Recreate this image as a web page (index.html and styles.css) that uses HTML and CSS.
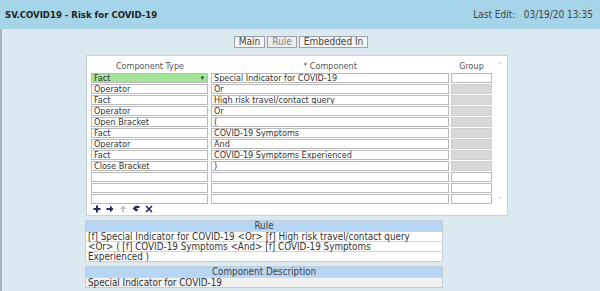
FILE: index.html
```html
<!DOCTYPE html>
<html lang="en">
<head>
  <meta charset="UTF-8" />
  <title>SV.COVID19 - Risk for COVID-19</title>
  <link rel="stylesheet" href="styles.css">
</head>
<body>
  <header class="titlebar">
    <span class="title">SV.COVID19 - Risk for COVID-19</span>
    <span class="edit">Last Edit:&nbsp;&nbsp; 03/19/20 13:35</span>
  </header>

  <div class="page">
    <nav class="tabs">
      <span class="tab">Main</span>
      <span class="tab current">Rule</span>
      <span class="tab">Embedded In</span>
    </nav>

    <div class="panel">
      <div class="grid-wrap">
        <div class="grid">
          <div class="head">Component Type</div>
          <div class="head">* Component</div>
          <div class="head">Group</div>

          <div class="cell type active">Fact<span class="caret">&#9662;</span></div>
          <div class="cell">Special Indicator for COVID-19</div>
          <div class="cell"></div>

          <div class="cell type">Operator</div>
          <div class="cell">Or</div>
          <div class="cell off"></div>

          <div class="cell type">Fact</div>
          <div class="cell">High risk travel/contact query</div>
          <div class="cell off"></div>

          <div class="cell type">Operator</div>
          <div class="cell">Or</div>
          <div class="cell off"></div>

          <div class="cell type">Open Bracket</div>
          <div class="cell">(</div>
          <div class="cell off"></div>

          <div class="cell type">Fact</div>
          <div class="cell">COVID-19 Symptoms</div>
          <div class="cell off"></div>

          <div class="cell type">Operator</div>
          <div class="cell">And</div>
          <div class="cell off"></div>

          <div class="cell type">Fact</div>
          <div class="cell">COVID-19 Symptoms Experienced</div>
          <div class="cell off"></div>

          <div class="cell type">Close Bracket</div>
          <div class="cell">)</div>
          <div class="cell off"></div>

          <div class="cell type"></div>
          <div class="cell"></div>
          <div class="cell"></div>

          <div class="cell type"></div>
          <div class="cell"></div>
          <div class="cell"></div>

          <div class="cell type"></div>
          <div class="cell"></div>
          <div class="cell"></div>
        </div>

        <div class="tools">
          <svg width="8" height="8" viewBox="0 0 8 8"><path d="M4 0.5v7M0.5 4h7" stroke="#1c2a66" stroke-width="2"/></svg>
          <svg width="8" height="8" viewBox="0 0 8 8"><path d="M0.5 3h3.5v-2.5l3.5 3.5-3.5 3.5v-2.5h-3.5z" fill="#1c2a66"/></svg>
          <svg width="8" height="8" viewBox="0 0 8 8"><path d="M3 7.5v-3.5h-2.5l3.5-3.5 3.5 3.5h-2.5v3.5z" fill="#c4c8cc"/></svg>
          <svg width="8" height="8" viewBox="0 0 8 8"><path d="M7.5 1l-3 0v-1l-4 3.5 4 3.5v-1.5h1.5v-1.5h-1.5v-1h3z" fill="#1c2a66"/></svg>
          <svg width="8" height="8" viewBox="0 0 8 8"><path d="M1 1l6 6M7 1l-6 6" stroke="#1c2a66" stroke-width="1.6"/></svg>
        </div>
      </div>

      <div class="scroll">
        <span>&#8963;</span>
        <span>&#8964;</span>
      </div>
    </div>

    <section class="box">
      <div class="box-head">Rule</div>
      <div class="line">[f] Special Indicator for COVID-19 &lt;Or&gt; [f] High risk travel/contact query</div>
      <div class="line">&lt;Or&gt; ( [f] COVID-19 Symptoms &lt;And&gt; [f] COVID-19 Symptoms</div>
      <div class="line">Experienced )</div>
    </section>

    <section class="box">
      <div class="box-head">Component Description</div>
      <div class="line grey">Special Indicator for COVID-19</div>
    </section>
  </div>
</body>
</html>
```

FILE: styles.css
```css
* {
  box-sizing: border-box;
  margin: 0;
  padding: 0;
}

body {
  width: 600px;
  height: 291px;
  overflow: hidden;
  background-color: #dde9f0;
  color: #333;
  font-family: "DejaVu Sans Condensed", "DejaVu Sans", sans-serif;
  font-size: 9px;
}

.titlebar {
  height: 29px;
  display: flex;
  justify-content: space-between;
  align-items: center;
  padding: 0 7px 0 5px;
  background-color: #a6d5e9;
  font-size: 10px;
}

.title {
  font-weight: bold;
  font-size: 9.5px;
  color: #222;
}

.edit {
  color: #444;
}

.page {
  height: 262px;
  border-left: 2px solid #aab4bb;
  padding-left: 84px;
}

.tabs {
  display: flex;
  justify-content: center;
  gap: 2px;
  padding: 7px 0 0 0;
  margin-left: -84px;
}

.tab {
  height: 12px;
  line-height: 10px;
  padding: 0 4px;
  border: 1px solid #9aa3a9;
  background-color: #f6f6f6;
  color: #444;
  font-size: 10px;
}

.tab.current {
  color: #888;
  background-color: #eceeef;
}

.panel {
  display: flex;
  width: 422px;
  height: 161px;
  margin-top: 7px;
  background-color: #fff;
  border: 1px solid #c6d3db;
}

.grid-wrap {
  padding: 4px 0 0 4px;
}

.grid {
  display: grid;
  grid-template-columns: 118px 238px 41px;
  grid-template-rows: 12px;
  grid-auto-rows: 10px;
  column-gap: 2px;
  row-gap: 1px;
}

.grid .head {
  height: 12px;
  text-align: center;
  color: #555;
  line-height: 12px;
}

.cell {
  position: relative;
  border: 1px solid #b9b9b9;
  background-color: #fff;
  line-height: 8px;
  padding-left: 2px;
  white-space: nowrap;
  overflow: hidden;
}

.cell.type {
  margin-right: 1px;
}

.cell.active {
  background-color: #a6e39a;
}

.caret {
  position: absolute;
  right: 3px;
  top: 0;
  font-size: 7px;
  color: #333;
}

.cell.off {
  background-color: #d8d8d8;
  border-color: #cfcfcf;
}

.tools {
  display: flex;
  gap: 5px;
  padding: 1px 0 0 2px;
}

.scroll {
  display: flex;
  flex-direction: column;
  justify-content: space-between;
  width: 12px;
  margin-left: 2px;
  padding: 6px 0 14px 0;
  color: #c3c8cc;
  font-size: 8px;
  line-height: 8px;
  text-align: center;
}

.box {
  width: 358px;
  margin-top: 4px;
  margin-left: -1px;
  border: 1px solid #c2cfd8;
  font-size: 9.8px;
}

.box-head {
  height: 10px;
  line-height: 10px;
  text-align: center;
  background-color: #b7d5f5;
  color: #444;
}

.line {
  height: 10px;
  line-height: 10px;
  padding-left: 2px;
  background-color: #fff;
  border-top: 1px solid #d6d6d6;
  white-space: nowrap;
}

.line.grey {
  background-color: #f1f1f1;
}
```
